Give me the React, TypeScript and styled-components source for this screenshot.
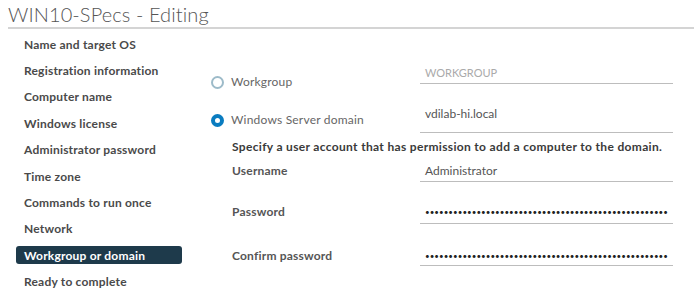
import React from "react";
import styled, { createGlobalStyle } from "styled-components";

const Global = createGlobalStyle`
  html, body { margin: 0; padding: 0; background: #fff; }
  body { font-family: Lato, "Open Sans", sans-serif; color: #333; }
  * { box-sizing: border-box; }
`;

const Page = styled.div`
  width: 694px;
  height: 298px;
  overflow: hidden;
  background: #fff;
`;

const Header = styled.div`
  height: 29px;
  margin-left: 8px;
  border-bottom: 2px solid #d4d4d4;
  display: flex;
  align-items: center;
`;

const Title = styled.h1`
  margin: 0;
  font-size: 20px;
  font-weight: 300;
  color: #555;
  line-height: 24px;
  letter-spacing: 0.1px;
`;

const Body = styled.div`
  display: flex;
`;

const Nav = styled.nav`
  width: 211px;
  padding-top: 2px;
  display: flex;
  flex-direction: column;
`;

const NavItem = styled.div<{ $active?: boolean }>`
  height: 26.4px;
  display: flex;
  align-items: center;
  margin-left: 16px;
  width: 166px;
  > span {
    display: flex;
    align-items: center;
    width: 100%;
    height: 18px;
    padding-left: 8px;
    border-radius: 3px;
    font-size: 12px;
    font-weight: 700;
    letter-spacing: 0.2px;
    background: ${(p) => (p.$active ? "#1e3a4b" : "transparent")};
    color: ${(p) => (p.$active ? "#fff" : "#4a4a4a")};
  }
`;

const Content = styled.div`
  display: flex;
  flex-direction: column;
  padding-top: 33px;
  width: 462px;
`;

const Row = styled.div`
  display: grid;
  grid-template-columns: 209px 253px;
  align-items: start;
`;

const Label = styled.div<{ $top: number }>`
  margin-top: ${(p) => p.$top}px;
  padding-left: 21px;
  line-height: 16px;
  font-size: 12px;
  font-weight: 700;
  letter-spacing: 0.2px;
  color: #555;
`;

const RadioLabel = styled.label<{ $top: number }>`
  margin-top: ${(p) => p.$top}px;
  display: flex;
  align-items: center;
  gap: 7px;
  line-height: 16px;
  font-size: 12px;
  color: #666;
  letter-spacing: 0.2px;
`;

const Radio = styled.span<{ $checked?: boolean }>`
  width: 13px;
  height: 13px;
  border-radius: 50%;
  flex: none;
  border: ${(p) => (p.$checked ? "4px solid #0a7cc0" : "2px solid #9dbbc9")};
  background: #fff;
`;

const Field = styled.div<{ $pt: number; $pb: number; $muted?: boolean }>`
  padding: ${(p) => p.$pt}px 0 ${(p) => p.$pb}px 5px;
  line-height: 16px;
  font-size: ${(p) => (p.$muted ? 11 : 12)}px;
  color: ${(p) => (p.$muted ? "#aaa" : "#555")};
  border-bottom: 1px solid #bdbdbd;
  white-space: nowrap;
`;

const Dots = styled.div`
  display: flex;
  justify-content: space-between;
  width: 243px;
  height: 16px;
  align-items: center;
  font-size: 8px;
  color: #222;
`;

const Description = styled.p`
  margin: 6px 0 0 21px;
  line-height: 16px;
  font-size: 12px;
  font-weight: 700;
  letter-spacing: 0.33px;
  color: #3a3a3a;
  white-space: nowrap;
`;

const navItems = [
  "Name and target OS",
  "Registration information",
  "Computer name",
  "Windows license",
  "Administrator password",
  "Time zone",
  "Commands to run once",
  "Network",
  "Workgroup or domain",
  "Ready to complete",
];

const Masked = ({ count }: { count: number }) => (
  <Dots aria-label="password">
    {Array.from({ length: count }, (_, i) => (
      <span key={i}>•</span>
    ))}
  </Dots>
);

export default function App() {
  return (
    <Page>
      <Global />
      <Header>
        <Title>WIN10-SPecs - Editing</Title>
      </Header>
      <Body>
        <Nav>
          {navItems.map((n) => (
            <NavItem key={n} $active={n === "Workgroup or domain"}>
              <span>{n}</span>
            </NavItem>
          ))}
        </Nav>
        <Content>
          <Row>
            <RadioLabel $top={12}>
              <Radio />
              Workgroup
            </RadioLabel>
            <Field $pt={3} $pb={2} $muted>
              WORKGROUP
            </Field>
          </Row>
          <Row>
            <RadioLabel $top={22}>
              <Radio $checked />
              Windows Server domain
            </RadioLabel>
            <Field $pt={16} $pb={10}>
              vdilab-hi.local
            </Field>
          </Row>
          <Description>
            Specify a user account that has permission to add a computer to the domain.
          </Description>
          <Row>
            <Label $top={8}>Username</Label>
            <Field $pt={8} $pb={2}>
              Administrator
            </Field>
          </Row>
          <Row>
            <Label $top={22}>Password</Label>
            <Field $pt={22} $pb={3}>
              <Masked count={52} />
            </Field>
          </Row>
          <Row>
            <Label $top={24}>Confirm password</Label>
            <Field $pt={24} $pb={1}>
              <Masked count={52} />
            </Field>
          </Row>
        </Content>
      </Body>
    </Page>
  );
}
